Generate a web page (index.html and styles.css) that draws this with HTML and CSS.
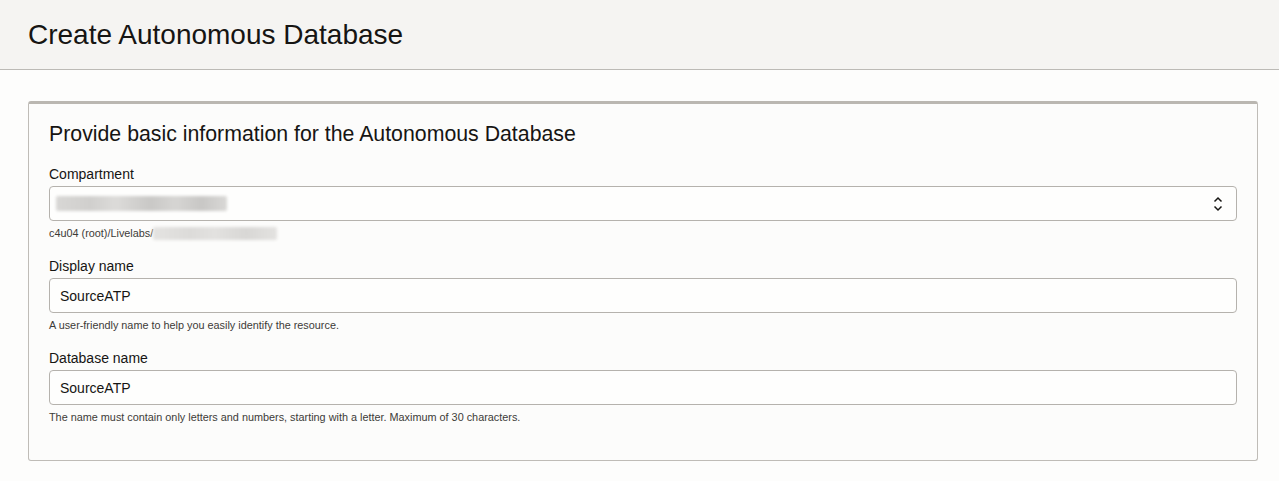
FILE: index.html
```html
<!DOCTYPE html>
<html lang="en">
<head>
<meta charset="utf-8">
<title>Create Autonomous Database</title>
<link rel="stylesheet" href="styles.css">
</head>
<body>
<header class="page-header">
  <h1 class="page-title">Create Autonomous Database</h1>
</header>
<main class="page-body">
  <section class="card">
    <h2 class="card-title">Provide basic information for the Autonomous Database</h2>

    <div class="field">
      <label class="field-label">Compartment</label>
      <div class="control select">
        <span class="blur blur-select"></span>
        <svg class="chevrons" width="10" height="16" viewBox="0 0 10 16" aria-hidden="true">
          <polyline points="1.5,5.5 5,2 8.5,5.5" fill="none" stroke="#161513" stroke-width="1.5"/>
          <polyline points="1.5,10.5 5,14 8.5,10.5" fill="none" stroke="#161513" stroke-width="1.5"/>
        </svg>
      </div>
      <div class="field-help help-path">c4u04 (root)/Livelabs/<span class="blur blur-help"></span></div>
    </div>

    <div class="field">
      <label class="field-label">Display name</label>
      <div class="control">SourceATP</div>
      <div class="field-help">A user-friendly name to help you easily identify the resource.</div>
    </div>

    <div class="field">
      <label class="field-label">Database name</label>
      <div class="control">SourceATP</div>
      <div class="field-help">The name must contain only letters and numbers, starting with a letter. Maximum of 30 characters.</div>
    </div>
  </section>
</main>
</body>
</html>
```

FILE: styles.css
```css
* { box-sizing: border-box; }

html, body {
  margin: 0;
  padding: 0;
  background: #fdfdfc;
  font-family: "Liberation Sans", Arial, sans-serif;
  color: #161513;
}

.page-header {
  height: 70px;
  background: #f5f4f2;
  border-bottom: 1px solid #bcbab6;
  padding: 19px 28px 0;
}

.page-title {
  margin: 0;
  font-size: 28px;
  line-height: 32px;
  font-weight: 400;
  color: #161513;
}

.page-body {
  padding: 31px 21px 0 28px;
}

.card {
  background: #fcfcfb;
  border: 1px solid #bfbcb7;
  border-top: 3px solid #bab7b1;
  border-radius: 3px;
  padding: 18px 20px 18px 20px;
}

.card-title {
  margin: 0 0 20px;
  font-size: 21.3px;
  line-height: 24px;
  font-weight: 400;
  color: #161513;
}

.field {
  display: flex;
  flex-direction: column;
  margin-bottom: 18px;
}

.field-label {
  font-size: 14px;
  line-height: 17px;
  margin-bottom: 3px;
  color: #161513;
}

.control {
  height: 35px;
  border: 1px solid #b5b2ad;
  border-radius: 4px;
  background: #fefefd;
  padding: 0 10px;
  display: flex;
  align-items: center;
  font-size: 14px;
  color: #161513;
}

.select {
  justify-content: space-between;
  padding: 0 10px 0 6px;
}

.chevrons {
  margin-right: 3px;
}

.field-help {
  margin-top: 6px;
  font-size: 10.85px;
  line-height: 13px;
  color: #3c3b38;
}

.help-path {
  display: flex;
  align-items: center;
}

.blur {
  display: inline-block;
  border-radius: 2px;
  filter: blur(1.5px);
}

.blur-select {
  width: 171px;
  height: 15px;
  background: linear-gradient(90deg, #d8d7d5 0%, #d0cfcd 20%, #dcdbd9 35%, #c9c8c6 55%, #d6d5d3 70%, #c8c7c5 85%, #d9d8d6 100%);
}

.blur-help {
  width: 124px;
  height: 13px;
  background: linear-gradient(90deg, #e4e3e1 0%, #dcdbd9 30%, #e2e1df 50%, #d8d7d5 75%, #e3e2e0 100%);
}
```
